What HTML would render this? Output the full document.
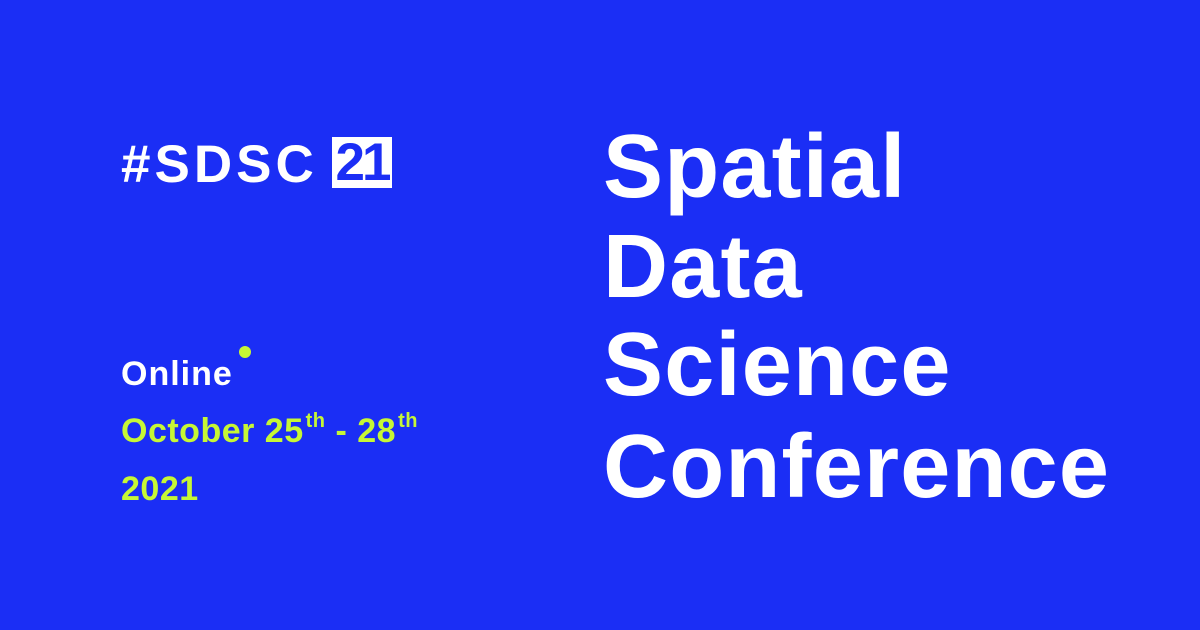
<!DOCTYPE html>
<html><head><meta charset="utf-8"><style>
html,body{margin:0;padding:0}
body{width:1200px;height:630px;background:#1b2ef5;position:relative;overflow:hidden;font-family:"Liberation Sans",sans-serif;font-weight:bold}
.a{position:absolute;white-space:nowrap;line-height:1}
.tag{left:121px;top:138px;font-size:53px;color:#fff;letter-spacing:4px}
.box{position:absolute;left:332px;top:137px;width:60px;height:51px;background:#fff;color:#1b2ef5;font-size:53px;line-height:51px;text-align:center;letter-spacing:-3px}
.big{left:603px;font-size:90px;color:#fff;letter-spacing:1.2px}
.s{font-size:34px;color:#c6f735;left:121px;letter-spacing:0.5px}
sup{font-size:20px;vertical-align:0;position:relative;top:-15px;margin-left:2px}
.dot{position:absolute;left:239px;top:346px;width:12px;height:12px;border-radius:50%;background:#c6f735}
</style></head><body>
<div class="a tag">#SDSC</div><div class="box">21</div>
<div class="a big" style="top:122px">Spatial</div>
<div class="a big" style="top:222px">Data</div>
<div class="a big" style="top:320px">Science</div>
<div class="a big" style="top:422px">Conference</div>
<div class="a s" style="top:357px;color:#fff;font-size:34px;letter-spacing:1px">Online</div>
<div class="dot"></div>
<div class="a s" style="top:414px">October 25<sup>th</sup> - 28<sup>th</sup></div>
<div class="a s" style="top:472px">2021</div>
</body></html>
